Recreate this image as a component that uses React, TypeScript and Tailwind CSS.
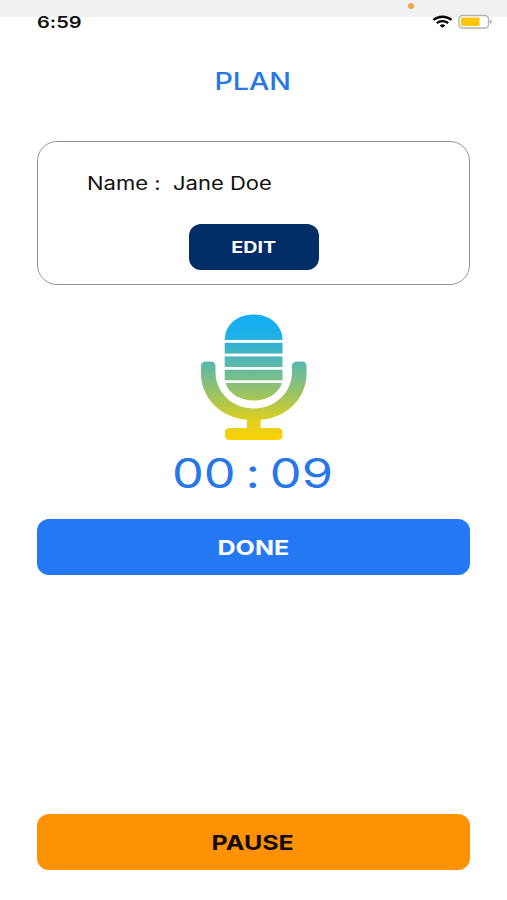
function StatusBar() {
  return (
    <div className="relative h-[50px] shrink-0">
      <div className="h-[17px] bg-[#f1f1f1]" />
      <span className="absolute left-[408px] top-[3px] h-[6px] w-[6px] rounded-full bg-[#f3a446]" />
      <span className="absolute left-[36.5px] top-[12px] origin-left scale-x-[1.25] text-[16px] leading-5 font-semibold text-[#111]">
        6:59
      </span>
      <svg className="absolute left-[432px] top-[15px]" width="21" height="13" viewBox="0 0 21 13" fill="none" stroke="#050505">
        <path d="M1.500 4.900C6.500 .6 14.500 .6 19.500 4.900" strokeWidth="2.500" />
        <path d="M4.800 8.100C8 5.400 13 5.400 16.200 8.100" strokeWidth="2.400" />
        <path d="M7.600 10.500Q10.500 8.200 13.400 10.500L10.500 12.800Z" fill="#050505" stroke="none" />
      </svg>
      <svg className="absolute left-[458px] top-[14px]" width="35" height="16" viewBox="0 0 35 16">
        <rect x="1" y="1.5" width="29.5" height="12.5" rx="3.6" fill="#fff" stroke="#b2b2b2" strokeWidth="1.4" />
        <rect x="3" y="3.6" width="18.5" height="8.4" rx="1.2" fill="#fac70b" />
        <path d="M32 5.7q1.8.6 1.8 2.1T32 9.9Z" fill="#a5a5a5" />
      </svg>
    </div>
  );
}

function Microphone() {
  return (
    <svg className="block shrink-0" width="108" height="127" viewBox="0 0 108 127">
      <defs>
        <linearGradient id="mic" x1="0" y1="0" x2="0" y2="126" gradientUnits="userSpaceOnUse">
          <stop offset="0" stopColor="#10adf4" />
          <stop offset="0.16" stopColor="#1eb0e7" />
          <stop offset="0.4" stopColor="#5bb9ab" />
          <stop offset="0.65" stopColor="#a0c45c" />
          <stop offset="0.85" stopColor="#e0cf1e" />
          <stop offset="1" stopColor="#fbd204" />
        </linearGradient>
      </defs>
      <g fill="url(#mic)">
        <path d="M24.700 26C24.700 12 36 .5 53.500 .5S82.500 12 82.500 26Z" />
        <rect x="24.700" y="28.800" width="57.800" height="10.800" />
        <rect x="24.700" y="42.400" width="57.800" height="10.600" />
        <rect x="24.700" y="55.700" width="57.800" height="10.600" />
        <path d="M25.500 69H82C78.500 80 67 86.500 53.700 86.500S29 80 25.500 69Z" />
        <path d="M1 52Q1 47.500 6 47.500H10Q15.500 47.500 15.500 52V58C15.500 79 33 94.500 53.800 94.500S92 79 92 58V52Q92 47.500 97.500 47.500H101.500Q106.500 47.500 106.500 52V60C106.500 83 88 104 60.700 105.700V114H77.500Q82.500 114 82.500 118V121.500Q82.500 126 77.500 126H30Q25 126 25 121.500V118Q25 114 30 114H47V105.700C20 104 1 83 1 60Z" />
      </g>
    </svg>
  );
}

export default function App() {
  return (
    <main className="flex h-[900px] w-[507px] flex-col overflow-hidden bg-white font-[Inter,sans-serif] [font-feature-settings:'calt'_0]">
      <StatusBar />
      <h1 className="flex h-[61px] shrink-0 items-center justify-center pt-px text-[24.5px] leading-none font-medium text-[#2877ea]">
        <span className="-ml-px scale-x-[1.17]">PLAN</span>
      </h1>
      <section className="mx-[37px] mt-[30px] flex h-[144px] shrink-0 flex-col items-center rounded-[20px] border border-[#949494]">
        <p className="mt-[31px] flex h-5 w-full items-center pl-[49px] text-[18.5px] leading-5 text-[#111]">
          <span className="origin-left scale-x-[1.19] whitespace-pre">Name :  Jane Doe</span>
        </p>
        <button className="mt-[31px] flex h-[46px] w-[130px] items-center justify-center rounded-[12px] bg-[#022d66] pt-[2px] text-[15.5px] font-bold text-white">
          <span className="scale-x-[1.27]">EDIT</span>
        </button>
      </section>
      <div className="mt-[29px] flex shrink-0 justify-center">
        <Microphone />
      </div>
      <p className="mt-[7px] flex h-[50px] shrink-0 items-center justify-center pr-[2px] text-[41px] leading-none text-[#2877ea]">
        <span className="scale-x-[1.23] whitespace-pre [word-spacing:-3.5px]">00 : 09</span>
      </p>
      <button className="mx-[37px] mt-[21px] flex h-[56px] shrink-0 items-center justify-center rounded-[12px] bg-[#2478f3] pt-[2px] pr-px text-[20.5px] font-bold text-white">
        <span className="scale-x-[1.22]">DONE</span>
      </button>
      <button className="mx-[37px] mt-auto mb-[30px] flex h-[56px] shrink-0 items-center justify-center rounded-[12px] bg-[#ff9105] pt-[2px] pr-px text-[20.5px] font-bold text-[#100b05]">
        <span className="scale-x-[1.22]">PAUSE</span>
      </button>
    </main>
  );
}
